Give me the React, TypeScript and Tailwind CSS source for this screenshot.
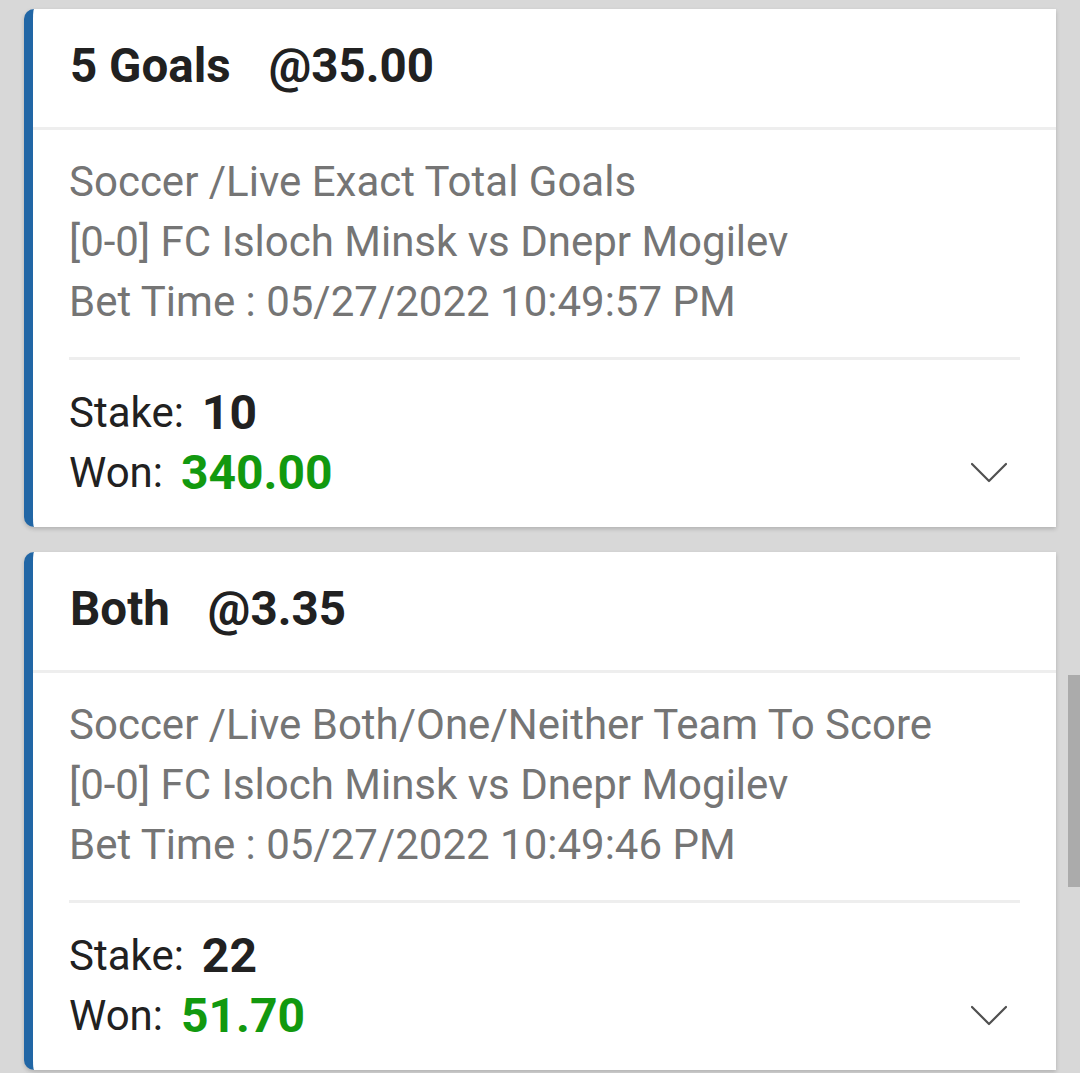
const bets = [
  {
    pick: "5 Goals",
    odds: "@35.00",
    market: "Soccer /Live Exact Total Goals",
    match: "[0-0] FC Isloch Minsk vs Dnepr Mogilev",
    time: "Bet Time : 05/27/2022 10:49:57 PM",
    stake: "10",
    won: "340.00",
  },
  {
    pick: "Both",
    odds: "@3.35",
    market: "Soccer /Live Both/One/Neither Team To Score",
    match: "[0-0] FC Isloch Minsk vs Dnepr Mogilev",
    time: "Bet Time : 05/27/2022 10:49:46 PM",
    stake: "22",
    won: "51.70",
  },
];

function Chevron() {
  return (
    <svg width="36" height="22" viewBox="0 0 36 22" fill="none">
      <path d="M1 2 L18 19 L35 2" stroke="#505050" strokeWidth="2.2" strokeLinecap="round" strokeLinejoin="round" />
    </svg>
  );
}

function BetCard({ bet }: { bet: (typeof bets)[number] }) {
  return (
    <div className="ml-[24px] w-[1032px] overflow-hidden rounded-l-[10px] border-l-[9px] border-[#2166a5] bg-white shadow-[0_2px_4px_rgba(0,0,0,0.18)]">
      <div className="flex h-[118px] items-center pb-[2px] pl-[37px] text-[47.5px] font-bold text-[#212121]">
        <span>{bet.pick}</span>
        <span className="ml-[38px]">{bet.odds}</span>
      </div>
      <div className="h-[3px] bg-[#eeeeee]" />
      <div className="px-[36px] pb-[24px] pt-[22px]">
        <div className="text-[42px] leading-[60px] text-[#757575]">
          <div>{bet.market}</div>
          <div>{bet.match}</div>
          <div>{bet.time}</div>
        </div>
        <div className="mt-[25px] h-[3px] w-[951px] bg-[#eeeeee]" />
        <div className="mt-[23px] text-[42px] leading-[60px] text-[#212121]">
          <div className="flex items-center">
            <span>Stake:</span>
            <span className="ml-[18px] text-[48px] font-bold">{bet.stake}</span>
          </div>
          <div className="flex items-center">
            <span>Won:</span>
            <span className="ml-[18px] text-[48px] font-bold text-[#12990f]">{bet.won}</span>
            <span className="ml-auto mr-[13px] flex">
              <Chevron />
            </span>
          </div>
        </div>
      </div>
    </div>
  );
}

export default function App() {
  return (
    <div className="relative h-[1073px] w-[1080px] overflow-hidden bg-[#d8d8d8] pt-[9px]" style={{ fontFamily: "Roboto, 'Noto Sans', sans-serif" }}>
      <div className="flex flex-col gap-[25px]">
        {bets.map((b) => (
          <BetCard key={b.time} bet={b} />
        ))}
      </div>
      <div className="absolute right-0 top-[675px] h-[212px] w-[12px] bg-[#ababab]" />
    </div>
  );
}
